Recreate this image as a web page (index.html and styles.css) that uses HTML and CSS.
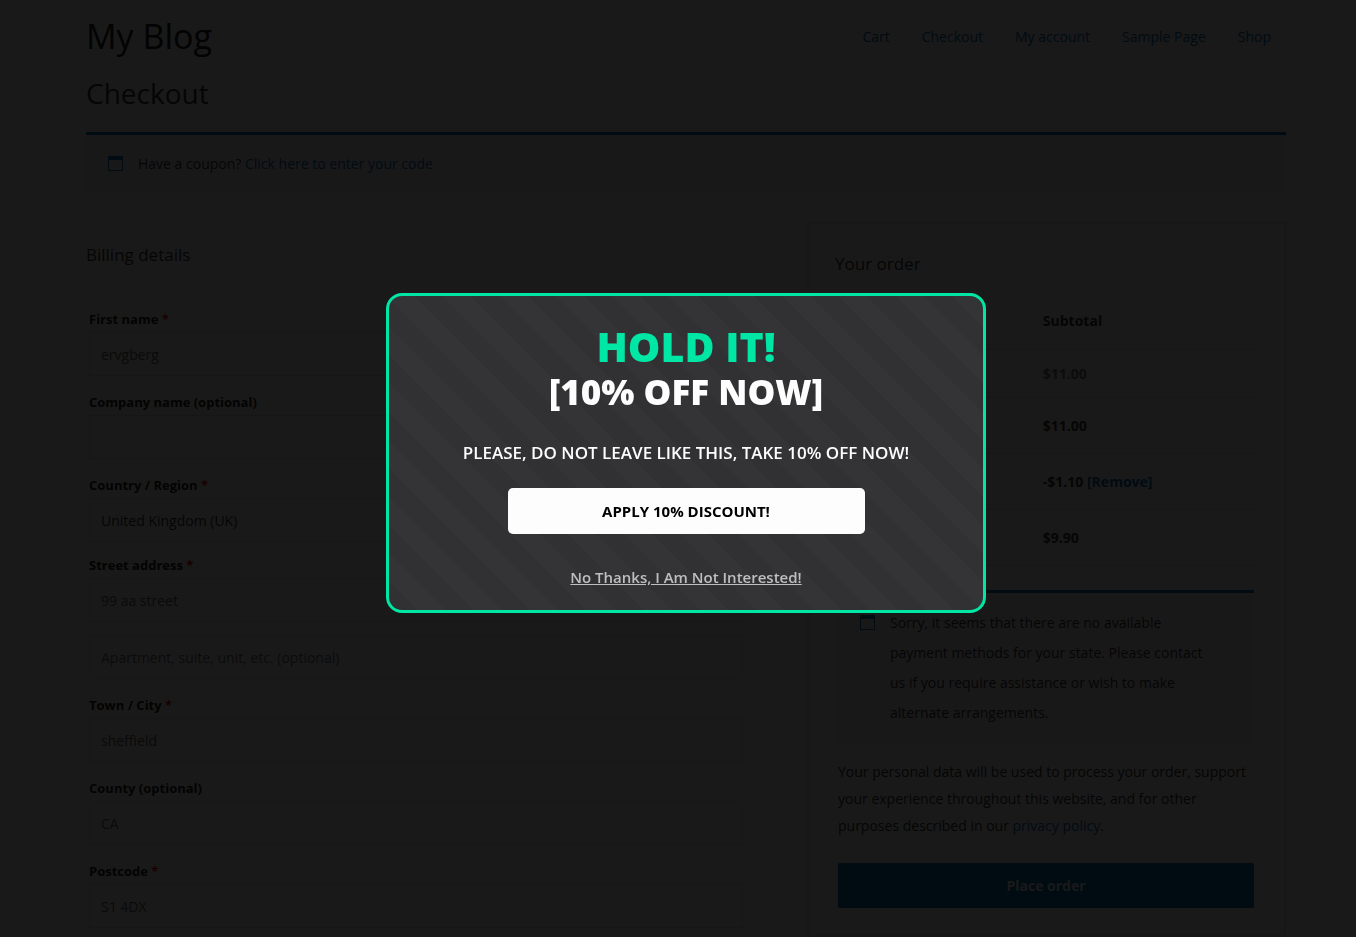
FILE: index.html
```html
<!DOCTYPE html>
<html lang="en">
<head>
<meta charset="utf-8">
<meta name="viewport" content="width=device-width, initial-scale=1">
<title>Checkout – My Blog</title>
<link rel="stylesheet" href="styles.css">
</head>
<body>
<div class="page">
  <header class="site-header">
    <div class="container site-header-inner">
      <a class="site-title" href="#">My Blog</a>
      <nav class="site-nav">
        <a href="#">Cart</a>
        <a href="#">Checkout</a>
        <a href="#">My account</a>
        <a href="#">Sample Page</a>
        <a href="#">Shop</a>
      </nav>
    </div>
  </header>
  <main class="container">
    <h1 class="page-title">Checkout</h1>
    <div class="notice">
      <svg class="notice-icon" viewBox="0 0 15 15" aria-hidden="true"><path d="M0 0h15v15H0zM1 4v10h13V4z" fill="currentColor" fill-rule="evenodd"/></svg>
      <p class="notice-text">Have a coupon? <a href="#">Click here to enter your code</a></p>
    </div>
    <form class="checkout">
      <section class="billing">
        <h2 class="section-title">Billing details</h2>
        <div class="fields">
          <div class="field">
            <label for="first">First name <span class="required">*</span></label>
            <input id="first" type="text" value="ervgberg">
          </div>
          <div class="field">
            <label for="company">Company name (optional)</label>
            <input id="company" type="text">
          </div>
          <div class="field field-country">
            <label for="country">Country / Region <span class="required">*</span></label>
            <select id="country"><option>United Kingdom (UK)</option></select>
          </div>
          <div class="field">
            <label for="street">Street address <span class="required">*</span></label>
            <input id="street" type="text" value="99 aa street">
          </div>
          <div class="field">
            <input type="text" aria-label="Apartment" placeholder="Apartment, suite, unit, etc. (optional)">
          </div>
          <div class="field">
            <label for="town">Town / City <span class="required">*</span></label>
            <input id="town" type="text" value="sheffield">
          </div>
          <div class="field">
            <label for="county">County (optional)</label>
            <input id="county" type="text" value="CA">
          </div>
          <div class="field">
            <label for="postcode">Postcode <span class="required">*</span></label>
            <input id="postcode" type="text" value="S1 4DX">
          </div>
        </div>
      </section>
      <section class="order">
        <h2 class="section-title">Your order</h2>
        <div class="order-body">
          <table class="order-table">
            <thead>
              <tr><td></td><th scope="col">Subtotal</th></tr>
            </thead>
            <tbody>
              <tr class="order-item"><td></td><td>$11.00</td></tr>
              <tr><td></td><td>$11.00</td></tr>
              <tr><td></td><td>-$1.10 <a href="#">[Remove]</a></td></tr>
              <tr><td></td><td>$9.90</td></tr>
            </tbody>
          </table>
          <div class="notice notice-payment">
            <svg class="notice-icon" viewBox="0 0 15 15" aria-hidden="true"><path d="M0 0h15v15H0zM1 4v10h13V4z" fill="currentColor" fill-rule="evenodd"/></svg>
            <p class="notice-text">Sorry, it seems that there are no available payment methods for your state. Please contact us if you require assistance or wish to make alternate arrangements.</p>
          </div>
          <p class="privacy">Your personal data will be used to process your order, support your experience throughout this website, and for other purposes described in our <a href="#">privacy policy</a>.</p>
          <button class="place-order" type="button">Place order</button>
        </div>
      </section>
    </form>
  </main>
</div>
<div class="overlay">
  <div class="popup" role="dialog" aria-modal="true" aria-labelledby="offer-title">
    <h2 class="offer-title" id="offer-title">HOLD IT!</h2>
    <p class="offer-amount">[10% OFF NOW]</p>
    <p class="offer-text">PLEASE, DO NOT LEAVE LIKE THIS, TAKE 10% OFF NOW!</p>
    <button class="offer-apply" type="button">APPLY 10% DISCOUNT!</button>
    <a class="offer-decline" href="#">No Thanks, I Am Not Interested!</a>
  </div>
</div>
</body>
</html>
```
FILE: styles.css
```css
* {
  box-sizing: border-box;
}

body,
h1,
h2,
p {
  margin: 0;
}

body {
  height: 100vh;
  overflow: hidden;
  background: #fff;
  color: #3a3a3a;
  font-family: "Open Sans", "Noto Sans", sans-serif;
  font-size: 14px;
  line-height: 27px;
}

a {
  color: #0170b9;
  text-decoration: none;
}

.page {
  padding-left: 16px;
}

.container {
  max-width: 1200px;
  margin: 0 auto;
}

.site-header {
  margin-left: -16px;
  padding-left: 16px;
  border-bottom: 1px solid #eee;
}

.site-header-inner {
  display: flex;
  align-items: center;
  justify-content: space-between;
  height: 72px;
}

.site-title {
  color: #222;
  font-size: 34px;
  font-weight: 400;
  line-height: 48px;
}

.site-nav {
  display: flex;
  gap: 32px;
  padding-right: 15px;
}

.page-title {
  padding-bottom: 19px;
  font-size: 28px;
  font-weight: 400;
  line-height: 40px;
}

.notice {
  display: flex;
  gap: 15px;
  padding: 14px 40px 13px 22px;
  border-top: 3px solid #0170b9;
  background: #f7f6f7;
  line-height: 30px;
}

.notice-icon {
  flex: none;
  width: 15px;
  height: 15px;
  margin-top: 7px;
  color: #0170b9;
}

.checkout {
  display: grid;
  grid-template-columns: 660fr 479fr;
  gap: 61px;
  margin-top: 30px;
}

.section-title {
  font-size: 17px;
  font-weight: 400;
  line-height: 26px;
}

.billing {
  padding-top: 20px;
}

.fields {
  display: flex;
  flex-direction: column;
  gap: 13px;
  padding: 38px 3px 0;
}

.field {
  display: flex;
  flex-direction: column;
}

.field-country {
  margin-bottom: -3px;
}

.field label {
  color: #222;
  font-size: 13px;
  font-weight: 700;
  line-height: 26px;
}

.required {
  color: #f00;
}

.field input,
.field select {
  width: 100%;
  height: 44px;
  padding: 0 11px;
  border: 1px solid #ddd;
  border-radius: 2px;
  background: #fff;
  color: #666;
  font-family: inherit;
  font-size: 14px;
  appearance: none;
}

.field select {
  color: #3a3a3a;
}

.field input::placeholder {
  color: #757575;
}

.order {
  padding: 27px 30px 27px 29px;
  border: 2px solid #ebebeb;
}

.order .section-title {
  margin-left: -3px;
}

.order-body {
  margin-top: 16px;
}

.order-table {
  width: 100%;
  border-collapse: collapse;
  table-layout: fixed;
  font-weight: 700;
}

.order-table th,
.order-table td {
  height: 56px;
  padding: 0 0 0 1px;
  border-bottom: 1px solid #e0e0e0;
  text-align: left;
}

.order-table td:first-child {
  width: 49%;
}

.order-table .order-item td {
  height: 48px;
  color: #777;
}

.notice-payment {
  margin-top: 24px;
  padding-top: 15px;
  padding-bottom: 15px;
}

.privacy {
  margin: 15px 0 24px;
}

.place-order {
  display: block;
  width: 100%;
  height: 45px;
  border: 0;
  border-radius: 2px;
  background: #0170b9;
  color: #fff;
  font-family: inherit;
  font-size: 14px;
  font-weight: 700;
}

.overlay {
  position: fixed;
  inset: 0;
  display: flex;
  align-items: center;
  justify-content: center;
  padding: 0 0 32px 16px;
  background: rgba(0, 0, 0, 0.9);
}

.popup {
  display: flex;
  flex-direction: column;
  align-items: center;
  width: 600px;
  max-width: 100%;
  padding: 26px 20px 19px;
  border: 3px solid #00e6a4;
  border-radius: 16px;
  background: repeating-linear-gradient(45deg, #313133 0, #313133 20px, #343436 20px, #343436 40px);
  color: #fdfdfd;
  text-align: center;
}

.offer-title {
  color: #00e6a4;
  font-size: 41px;
  font-weight: 800;
  line-height: 48px;
}

.offer-amount {
  font-size: 35px;
  font-weight: 800;
  line-height: 44px;
}

.offer-text {
  margin-top: 25px;
  font-size: 17px;
  font-weight: 600;
}

.offer-apply {
  width: 357px;
  max-width: 100%;
  height: 46px;
  margin-top: 22px;
  border: 0;
  border-radius: 5px;
  background: #fdfdfd;
  color: #000;
  font-family: inherit;
  font-size: 15px;
  font-weight: 700;
}

.offer-decline {
  margin-top: 30px;
  color: #bfbfbf;
  font-size: 15px;
  font-weight: 600;
  text-decoration: underline;
}
```
